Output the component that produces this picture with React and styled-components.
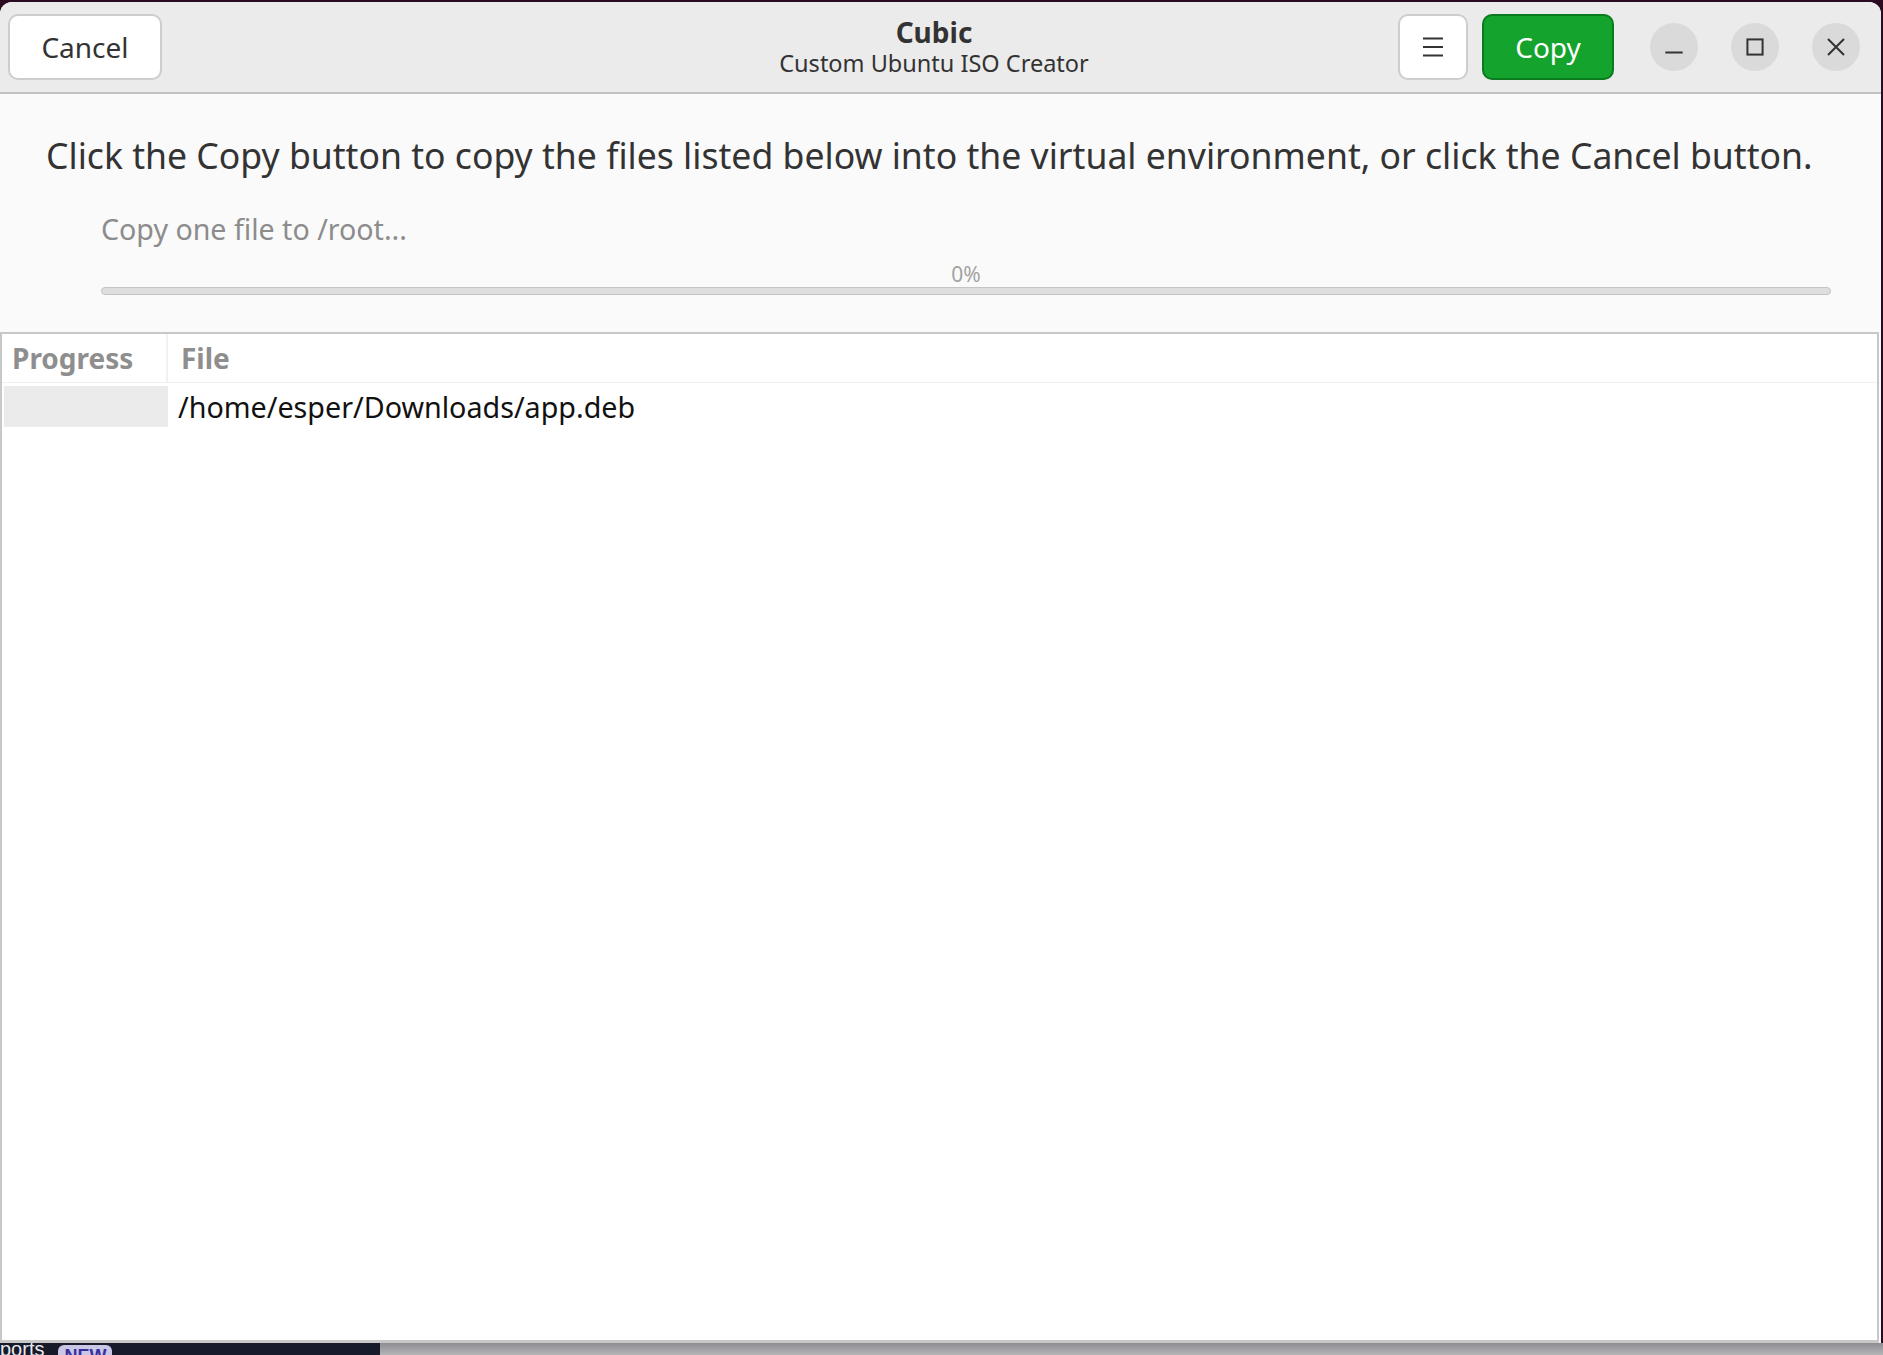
import React from "react";
import styled, { createGlobalStyle } from "styled-components";

const GlobalStyle = createGlobalStyle`
  html, body {
    margin: 0;
    padding: 0;
    background: #2a0b22;
  }
  body {
    font-family: "Noto Sans", "Open Sans", sans-serif;
  }
  * { box-sizing: border-box; }
`;

const Screen = styled.div`
  width: 1883px;
  height: 1355px;
  display: flex;
  flex-direction: column;
  overflow: hidden;
  padding-top: 2px;
`;

const Window = styled.div`
  flex: 1;
  display: flex;
  flex-direction: column;
  margin-right: 2px;
  border-radius: 12px 12px 0 0;
  overflow: hidden;
  background: #fafafa;
`;

const HeaderBar = styled.header`
  height: 92px;
  flex: none;
  display: grid;
  grid-template-columns: 1fr auto 1fr;
  align-items: center;
  padding: 0 21px 0 8px;
  background: #ebebeb;
  border-bottom: 2px solid #c2c2c2;
`;

const Side = styled.div`
  display: flex;
  align-items: center;
  justify-content: ${(p) => (p.end ? "flex-end" : "flex-start")};
`;

const Button = styled.button`
  height: 66px;
  min-width: ${(p) => p.width || 0}px;
  padding: 0 20px;
  border-radius: 10px;
  border: 2px solid ${(p) => (p.suggested ? "#0c7a1f" : "#cdcdcd")};
  background: ${(p) => (p.suggested ? "#14a32c" : "#ffffff")};
  color: ${(p) => (p.suggested ? "#ffffff" : "#333333")};
  font-family: "Noto Sans", sans-serif;
  font-size: 28px;
  display: flex;
  align-items: center;
  justify-content: center;
  margin-right: ${(p) => p.gap || 0}px;
`;

const Title = styled.div`
  display: flex;
  flex-direction: column;
  align-items: center;
  color: #333;
`;

const TitleMain = styled.div`
  font-weight: 700;
  font-size: 28px;
  line-height: 32px;
`;

const TitleSub = styled.div`
  font-size: 23.5px;
  line-height: 30px;
`;

const WindowControls = styled.div`
  display: flex;
  gap: 33px;
  margin-left: 36px;
`;

const ControlButton = styled.div`
  width: 48px;
  height: 48px;
  border-radius: 50%;
  background: #dadada;
  display: flex;
  align-items: center;
  justify-content: center;
`;

const Body = styled.section`
  padding: 38px 50px 37px 46px;
  display: flex;
  flex-direction: column;
  flex: none;
`;

const Instruction = styled.p`
  margin: 0;
  font-size: 35.6px;
  color: #333;
  line-height: 46px;
`;

const Status = styled.div`
  margin: 33px 0 0 55px;
  display: flex;
  flex-direction: column;
`;

const StatusText = styled.div`
  font-size: 28.6px;
  color: #8c8c8c;
  line-height: 36px;
`;

const Percent = styled.div`
  text-align: center;
  font-size: 21px;
  color: #a2a2a2;
  margin-top: 15px;
  line-height: 24px;
`;

const Track = styled.div`
  height: 8px;
  margin-top: 1px;
  border-radius: 4px;
  background: #dedede;
  border: 1px solid #c4c4c4;
`;

const Table = styled.div`
  flex: 1;
  background: #ffffff;
  border: 2px solid #c8c8c8;
  border-bottom-width: 3px;
  margin-right: 2px;
  display: flex;
  flex-direction: column;
`;

const Row = styled.div`
  display: grid;
  grid-template-columns: 166px 1fr;
  height: ${(p) => p.h}px;
  border-bottom: ${(p) => (p.head ? "1px solid #f0f0f0" : "none")};
`;

const HeadCell = styled.div`
  display: flex;
  align-items: center;
  padding-left: ${(p) => p.pad}px;
  font-weight: 700;
  font-size: 28px;
  color: #8e8e8e;
  border-right: ${(p) => (p.divider ? "2px solid #f1f1f1" : "none")};
`;

const ProgressCell = styled.div`
  margin: 3px 0 2px 2px;
  background: #ebebeb;
`;

const FileCell = styled.div`
  display: flex;
  align-items: center;
  padding-left: 10px;
  font-size: 28.7px;
  color: #111;
`;

const Taskbar = styled.div`
  height: 12px;
  flex: none;
  display: flex;
  background: linear-gradient(#8d8d92, #b5b5b8);
`;

const TaskbarDark = styled.div`
  width: 380px;
  background: #171a2b;
  color: #e8e8ee;
  font-family: "Liberation Sans", sans-serif;
  font-size: 20px;
  line-height: 24px;
  display: flex;
  align-items: flex-start;
  gap: 14px;
  overflow: hidden;
`;

const TaskbarText = styled.span`
  margin-top: -6px;
`;

const NewBadge = styled.span`
  background: #c9c6e6;
  color: #3a2f9e;
  font-weight: 700;
  font-size: 18px;
  border-radius: 6px;
  padding: 0 6px;
  margin-top: 2px;
  line-height: 22px;
`;

const Icon = ({ children, size = 24 }) => (
  <svg width={size} height={size} viewBox="0 0 24 24" fill="none" stroke="#333" strokeWidth="2">
    {children}
  </svg>
);

export default function App() {
  return (
    <>
      <GlobalStyle />
      <Screen>
        <Window>
          <HeaderBar>
            <Side>
              <Button width={154}>Cancel</Button>
            </Side>
            <Title>
              <TitleMain>Cubic</TitleMain>
              <TitleSub>Custom Ubuntu ISO Creator</TitleSub>
            </Title>
            <Side end>
              <Button width={70} gap={14}>
                <Icon>
                  <path d="M2 3.5h20M2 12h20M2 20.5h20" strokeWidth="2" />
                </Icon>
              </Button>
              <Button width={132} suggested>Copy</Button>
              <WindowControls>
                <ControlButton>
                  <Icon size={26}>
                    <path d="M4 17h16" strokeWidth="1.85" />
                  </Icon>
                </ControlButton>
                <ControlButton>
                  <Icon size={26}>
                    <rect x="5" y="5" width="14" height="14" strokeWidth="1.85" />
                  </Icon>
                </ControlButton>
                <ControlButton>
                  <Icon size={26}>
                    <path d="M4.6 4.6l14.8 14.8M19.4 4.6L4.6 19.4" strokeWidth="1.85" />
                  </Icon>
                </ControlButton>
              </WindowControls>
            </Side>
          </HeaderBar>
          <Body>
            <Instruction>
              Click the Copy button to copy the files listed below into the virtual environment, or click the Cancel button.
            </Instruction>
            <Status>
              <StatusText>Copy one file to /root...</StatusText>
              <Percent>0%</Percent>
              <Track />
            </Status>
          </Body>
          <Table>
            <Row head h={49}>
              <HeadCell pad={10} divider>Progress</HeadCell>
              <HeadCell pad={13}>File</HeadCell>
            </Row>
            <Row h={46}>
              <ProgressCell />
              <FileCell>/home/esper/Downloads/app.deb</FileCell>
            </Row>
          </Table>
        </Window>
        <Taskbar>
          <TaskbarDark>
            <TaskbarText>ports</TaskbarText>
            <NewBadge>NEW</NewBadge>
          </TaskbarDark>
        </Taskbar>
      </Screen>
    </>
  );
}
